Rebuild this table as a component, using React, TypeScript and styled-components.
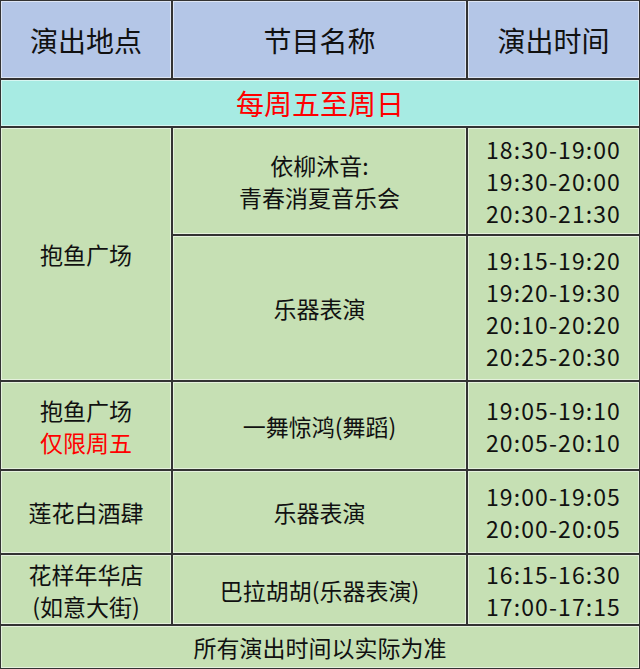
import * as React from 'react';
import styled, { createGlobalStyle } from 'styled-components';

const Global = createGlobalStyle`
  html, body {
    margin: 0;
    padding: 0;
    background: #ffffff;
  }
  body {
    font-family: "Noto Sans CJK SC", "Noto Sans", sans-serif;
    color: #111;
  }
`;

const Table = styled.div`
  display: grid;
  grid-template-columns: 170px 293px 171px;
  grid-template-rows: 77px 46px 106px 144px 87px 82px 69px 42px;
  gap: 2px;
  width: 640px;
  height: 669px;
  box-sizing: border-box;
  border: 1px solid #333;
  background: #333;
`;

type Tone = 'head' | 'band' | 'body';

const tones: Record<Tone, string> = {
  head: '#b4c6e7',
  band: '#a7ebe3',
  body: '#c6e0b4',
};

const Cell = styled.div<{ $tone: Tone; $span?: number; $rows?: number }>`
  display: flex;
  flex-direction: column;
  align-items: center;
  justify-content: center;
  text-align: center;
  background: ${(p) => tones[p.$tone]};
  grid-column: span ${(p) => p.$span ?? 1};
  grid-row: span ${(p) => p.$rows ?? 1};
  font-size: 23px;
  line-height: 32px;
  box-shadow: inset 0 0 0 1px rgba(255, 255, 255, 0.55);
`;

const HeadText = styled.span`
  font-size: 28px;
  line-height: 1;
`;

const Red = styled.span<{ $big?: boolean }>`
  color: #ff0000;
  font-size: ${(p) => (p.$big ? '28px' : 'inherit')};
  line-height: ${(p) => (p.$big ? '1' : 'inherit')};
`;

const Line = styled.span`
  display: block;
  white-space: nowrap;
`;

const Time = styled(Line)`
  letter-spacing: 1.1px;
`;

const Lines = ({ items }: { items: string[] }) => (
  <>
    {items.map((t) => (
      <Line key={t}>{t}</Line>
    ))}
  </>
);

const Times = ({ items }: { items: string[] }) => (
  <>
    {items.map((t) => (
      <Time key={t}>{t}</Time>
    ))}
  </>
);

export default function App() {
  return (
    <>
      <Global />
      <Table>
        <Cell $tone="head"><HeadText>演出地点</HeadText></Cell>
        <Cell $tone="head"><HeadText>节目名称</HeadText></Cell>
        <Cell $tone="head"><HeadText>演出时间</HeadText></Cell>

        <Cell $tone="band" $span={3}><Red $big>每周五至周日</Red></Cell>

        <Cell $tone="body" $rows={2}><Line>抱鱼广场</Line></Cell>
        <Cell $tone="body"><Lines items={['依柳沐音:', '青春消夏音乐会']} /></Cell>
        <Cell $tone="body"><Times items={['18:30-19:00', '19:30-20:00', '20:30-21:30']} /></Cell>

        <Cell $tone="body"><Line>乐器表演</Line></Cell>
        <Cell $tone="body">
          <Times items={['19:15-19:20', '19:20-19:30', '20:10-20:20', '20:25-20:30']} />
        </Cell>

        <Cell $tone="body">
          <Line>抱鱼广场</Line>
          <Line><Red>仅限周五</Red></Line>
        </Cell>
        <Cell $tone="body"><Line>一舞惊鸿(舞蹈)</Line></Cell>
        <Cell $tone="body"><Times items={['19:05-19:10', '20:05-20:10']} /></Cell>

        <Cell $tone="body"><Line>莲花白酒肆</Line></Cell>
        <Cell $tone="body"><Line>乐器表演</Line></Cell>
        <Cell $tone="body"><Times items={['19:00-19:05', '20:00-20:05']} /></Cell>

        <Cell $tone="body"><Lines items={['花样年华店', '(如意大街)']} /></Cell>
        <Cell $tone="body"><Line>巴拉胡胡(乐器表演)</Line></Cell>
        <Cell $tone="body"><Times items={['16:15-16:30', '17:00-17:15']} /></Cell>

        <Cell $tone="body" $span={3}><Line>所有演出时间以实际为准</Line></Cell>
      </Table>
    </>
  );
}
